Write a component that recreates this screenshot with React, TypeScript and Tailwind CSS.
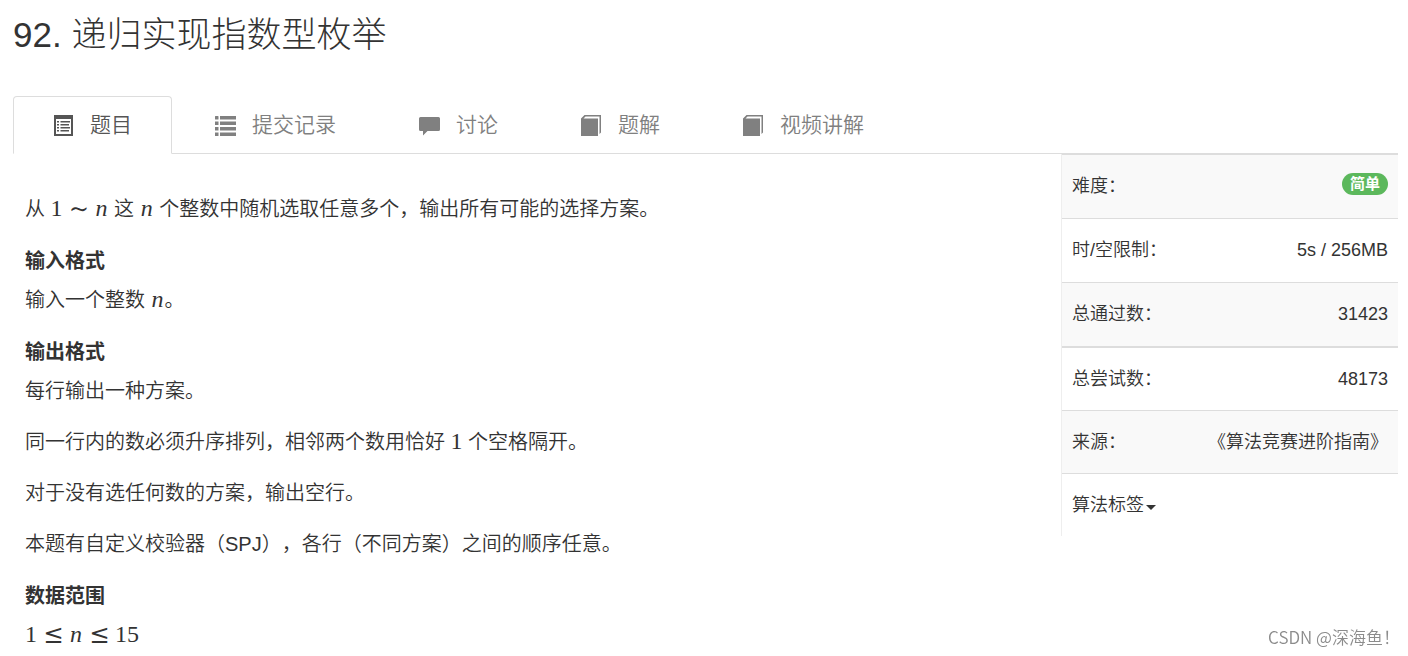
import type { ReactNode } from 'react';

const ListAltIcon = () => (
  <svg viewBox="0 0 21 21" className="w-[21px] h-[21px]" fill="currentColor">
    <path fillRule="evenodd" d="M1 0h19v21H1zM3 4v15h15V4z" />
    <path d="M4 6h2v1.500H4zM4 9h2v1.500H4zM4 12h2v1.500H4zM4 15h2v1.500H4zM7.500 6H17v1.500H7.500zM7.500 9H16v1.500H7.500zM7.500 12H17v1.500H7.500zM7.500 15H16v1.500H7.500z" />
  </svg>
);

const ListIcon = () => (
  <svg viewBox="0 0 21 21" className="w-[21px] h-[21px]" fill="currentColor">
    <path d="M.5 1H3a.5.500 0 0 1 .5.500V4a.5.500 0 0 1-.5.500H.5A.5.500 0 0 1 0 4V1.500A.5.500 0 0 1 .5 1zM0 6.500h3.500V10H0zM0 12h3.500v3.500H0zM0 17.500h3.500V21H0z" />
    <path d="M5 1h16v3.500H5zM5 6.500h16V10H5zM5 12h16v3.500H5zM5 17.500h16V21H5z" />
  </svg>
);

const CommentIcon = () => (
  <svg viewBox="0 0 21 21" className="w-[21px] h-[21px]" fill="currentColor">
    <path d="M1.500 2h18a1.500 1.500 0 0 1 1.500 1.500v11a1.500 1.500 0 0 1-1.500 1.500H8.500L4 20.500V16H1.500A1.500 1.500 0 0 1 0 14.500v-11A1.500 1.500 0 0 1 1.500 2z" />
  </svg>
);

const BookIcon = () => (
  <svg viewBox="0 0 21 21" className="w-[21px] h-[21px]" fill="currentColor">
    <path d="M0 3.500 3.500 0H20v17.500L18.500 19V1.500H4.500L2.500 3.500H17V21H0z" />
  </svg>
);

const tabs = [
  { label: '题目', icon: ListAltIcon, active: true },
  { label: '提交记录', icon: ListIcon },
  { label: '讨论', icon: CommentIcon },
  { label: '题解', icon: BookIcon },
  { label: '视频讲解', icon: BookIcon },
];

const limits = [
  {
    label: '难度：',
    value: (
      <span className="inline-block rounded-full bg-[#5cb85c] px-2 align-top text-[15px] leading-[22px] font-bold text-white">
        简单
      </span>
    ),
  },
  { label: '时/空限制：', value: '5s / 256MB' },
  { label: '总通过数：', value: '31423' },
];

const stats = [
  { label: '总尝试数：', value: '48173' },
  { label: '来源：', value: '《算法竞赛进阶指南》' },
];

function Num({ children }: { children: ReactNode }) {
  return <span className="font-['Liberation_Serif',serif] text-[24px] leading-5 font-normal">{children}</span>;
}

function Var({ children }: { children: ReactNode }) {
  return (
    <i className="inline-block w-[14px] text-center font-['Liberation_Serif',serif] text-[24px] leading-5 font-normal">
      {children}
    </i>
  );
}

function Rel({ children }: { children: ReactNode }) {
  return (
    <span className="mx-[7px] inline-block w-[18px] text-center font-['DejaVu_Math_TeX_Gyre','Liberation_Serif',serif] text-[24px] leading-5 font-normal">
      {children}
    </span>
  );
}

function Section({ title, children }: { title: string; children: ReactNode }) {
  return (
    <section>
      <h4 className="mt-[26px] mb-[14px] leading-[22px] font-bold">{title}</h4>
      {children}
    </section>
  );
}

function Paragraph({ children }: { children: ReactNode }) {
  return <p className="mb-[22px] leading-[29px]">{children}</p>;
}

function InfoRow({ label, value }: { label: string; value: ReactNode }) {
  return (
    <tr>
      <th scope="row" className="border-t border-[#ddd] pl-[10px] text-left font-[350]">
        {label}
      </th>
      <td className="border-t border-[#ddd] pr-[10px] text-right">{value}</td>
    </tr>
  );
}

export default function App() {
  return (
    <div className="min-h-screen bg-white pr-[10px] pl-[13px] font-['Liberation_Sans','Noto_Sans_CJK_SC',sans-serif] font-[350] text-[#333] [text-spacing-trim:space-all]">
      <h1 className="pt-[15px] text-[35px] leading-10 font-light">92. 递归实现指数型枚举</h1>

      <nav className="mt-[41px] flex gap-[3px] border-b border-[#ddd] text-[21px]">
        {tabs.map(({ label, icon: Icon, active }) => (
          <a
            key={label}
            href="#"
            className={`-mb-px flex h-[58px] items-center gap-4 rounded-t border px-[39px] ${
              active ? 'border-[#ddd] border-b-white bg-white text-[#555]' : 'border-transparent text-[#808080]'
            }`}
          >
            <Icon />
            <span>{label}</span>
          </a>
        ))}
      </nav>

      <div className="flex items-start">
        <main className="min-w-0 flex-1 pt-[41px] pl-3 text-[20px]">
          <Paragraph>
            从 <Num>1</Num>
            <Rel>∼</Rel>
            <Var>n</Var> 这 <Var>n</Var> 个整数中随机选取任意多个，输出所有可能的选择方案。
          </Paragraph>

          <Section title="输入格式">
            <Paragraph>
              输入一个整数 <Var>n</Var>。
            </Paragraph>
          </Section>

          <Section title="输出格式">
            <Paragraph>每行输出一种方案。</Paragraph>
            <Paragraph>
              同一行内的数必须升序排列，相邻两个数用恰好 <Num>1</Num> 个空格隔开。
            </Paragraph>
            <Paragraph>对于没有选任何数的方案，输出空行。</Paragraph>
            <Paragraph>本题有自定义校验器（SPJ），各行（不同方案）之间的顺序任意。</Paragraph>
          </Section>

          <Section title="数据范围">
            <p className="leading-[29px]">
              <Num>1</Num>
              <Rel>≤</Rel>
              <Var>n</Var>
              <Rel>≤</Rel>
              <Num>15</Num>
            </p>
          </Section>
        </main>

        <aside className="w-[337px] shrink-0 border-l border-[#eee] text-[18px]">
          <table className="w-full border-separate border-spacing-0 [&_tr]:h-16 [&_tr:nth-child(odd)]:bg-[#f9f9f9]">
            <tbody>
              {limits.map(row => (
                <InfoRow key={row.label} {...row} />
              ))}
            </tbody>
          </table>
          <table className="w-full border-separate border-spacing-0 border-t border-[#ddd] [&_tr]:h-[63px] [&_tr:nth-child(even)]:bg-[#f9f9f9]">
            <tbody>
              {stats.map(row => (
                <InfoRow key={row.label} {...row} />
              ))}
            </tbody>
          </table>
          <button className="flex h-[63px] w-full items-center gap-[2px] border-t border-[#ddd] pl-[10px]">
            算法标签
            <svg viewBox="0 0 10 5" className="mt-1 h-[5px] w-[10px]" fill="currentColor">
              <path d="M0 0h10L5 5z" />
            </svg>
          </button>
        </aside>
      </div>

      <div className="fixed right-2 bottom-[5px] font-['Noto_Sans_CJK_SC',sans-serif] text-[17px] leading-7 text-[#8c8c8c]">
        CSDN @深海鱼！
      </div>
    </div>
  );
}
